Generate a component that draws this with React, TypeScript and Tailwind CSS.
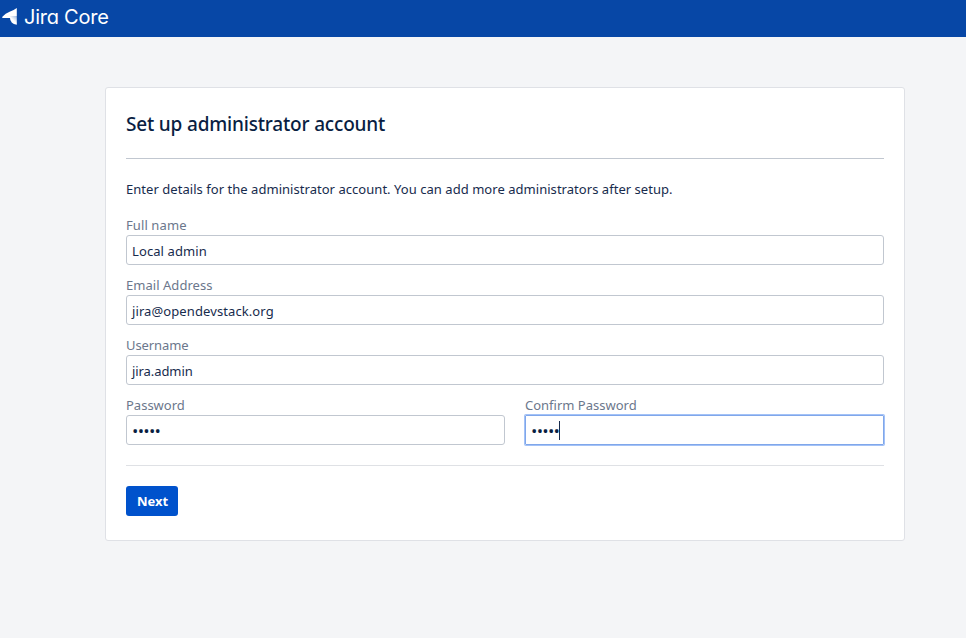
import React from "react";

type FieldProps = { id: string; label: string; value: string; spacing: string; labelSpacing: string };

const labelClass = "block h-5 text-[13px] leading-[20px] text-[#6b778c] whitespace-nowrap";

function Field({ id, label, value, spacing, labelSpacing }: FieldProps) {
  return (
    <div>
      <label htmlFor={id} className={`${labelClass} ${labelSpacing}`}>{label}</label>
      <div id={id} className={`h-[30px] rounded-[3px] border border-[#c1c7d0] bg-white px-[5px] pt-[1px] text-[13px] leading-[28px] whitespace-nowrap text-[#172b4d] ${spacing}`}>
        {value}
      </div>
    </div>
  );
}

function Dots() {
  return (
    <span className="w-[28px] font-['Open_Sans'] text-[17px] leading-[30px] tracking-[-0.75px] whitespace-nowrap text-[#091e42]">•••••</span>
  );
}

export default function App() {
  return (
    <div className="min-h-screen w-full bg-[#f4f5f7] font-['Noto_Sans','Open_Sans',sans-serif] text-[#172b4d]">
      <header className="flex h-[37px] items-start bg-[#0747a6] text-white">
        <svg className="mt-[8px] ml-[2px] h-[17px] w-[16px]" viewBox="0 0 16 17">
          <defs>
            <linearGradient id="wing" x1="14" y1="8" x2="9.5" y2="13" gradientUnits="userSpaceOnUse">
              <stop offset="0" stopColor="#fff" stopOpacity="0.65" />
              <stop offset="0.75" stopColor="#fff" />
            </linearGradient>
          </defs>
          <path d="M14.8 0V8H8V10H1.2Q-0.4 9.8 0.6 8.6Q3.4 5.2 7.6 3.7Q12 2.2 14.8 0Z" fill="#fff" />
          <path d="M8 8H14.8V16.8Q8 15.5 8 10Z" fill="url(#wing)" />
        </svg>
        <span className="ml-[6px] font-['Inter'] text-[20px] leading-[34px] tracking-[-0.25px] whitespace-nowrap [font-feature-settings:'cv11']">Jira Core</span>
      </header>

      <main className="mt-[50px] ml-[105px] h-[454px] w-[800px] rounded-[3px] border border-[#dfe1e6] bg-white px-5 pt-5">
        <h1 className="h-[50px] text-[19px] leading-[32px] font-medium tracking-[-0.18px] whitespace-nowrap text-[#091e42]">Set up administrator account</h1>
        <hr className="border-t border-[#c1c7d0]" />
        <p className="mt-[20px] h-[20px] text-[13px] leading-[20px] tracking-[0.04px] whitespace-nowrap">
          Enter details for the administrator account. You can add more administrators after setup.
        </p>
        <form className="mt-[16px] flex flex-col gap-[10px]">
          <Field id="fullname" label="Full name" value="Local admin" spacing="tracking-[0.1px]" labelSpacing="tracking-[0.1px]" />
          <Field id="email" label="Email Address" value="jira@opendevstack.org" spacing="tracking-[0.1px]" labelSpacing="tracking-[0.04px]" />
          <Field id="username" label="Username" value="jira.admin" spacing="tracking-[-0.08px]" labelSpacing="tracking-[-0.1px]" />
          <div className="flex gap-5">
            <div className="w-[379px]">
              <label className={`${labelClass} tracking-[0px]`}>Password</label>
              <div className="flex h-[30px] rounded-[3px] border border-[#c1c7d0] px-[5px]"><Dots /></div>
            </div>
            <div className="w-[359px]">
              <label className={`${labelClass} tracking-[0px]`}>Confirm Password</label>
              <div className="flex h-[30px] rounded-[1px] border border-[#80a7ea] px-[5px] shadow-[0_0_0_1px_#a3c2f7]">
                <Dots />
                <span className="mt-[5px] h-[19px] w-px bg-[#172b4d]" />
              </div>
            </div>
          </div>
        </form>
        <hr className="mt-5 border-t border-[#dfe1e5]" />
        <button className="mt-5 block h-[30px] w-[52px] rounded-[3px] bg-[#0052cc] pl-px text-[13px] leading-[30px] font-bold text-white">Next</button>
      </main>
    </div>
  );
}
